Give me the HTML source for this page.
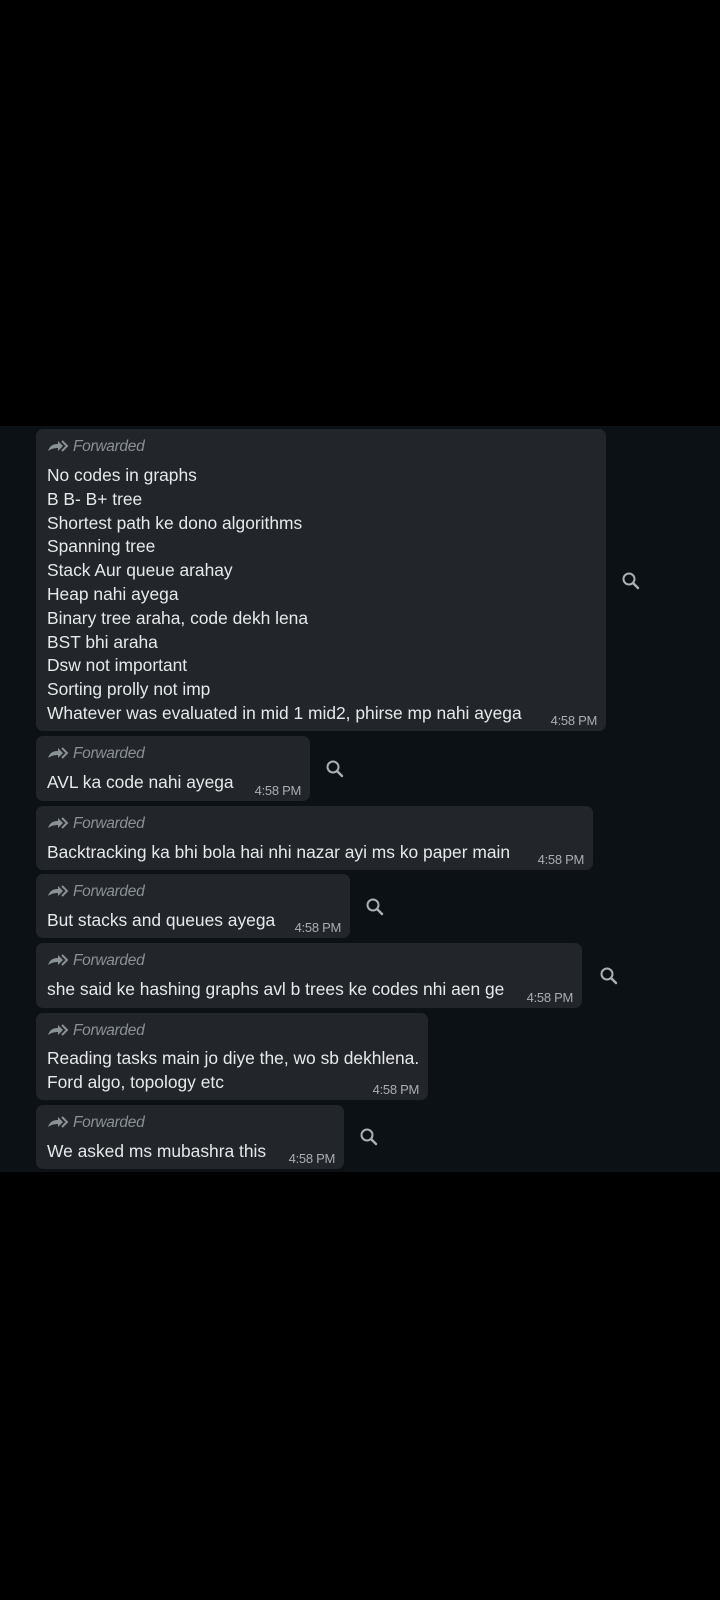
<!DOCTYPE html>
<html><head><meta charset="utf-8"><style>
*{margin:0;padding:0;box-sizing:border-box}
body{width:720px;height:1600px;background:#000;position:relative;overflow:hidden;font-family:"Liberation Sans",sans-serif}
.chat{position:absolute;left:0;top:426px;width:720px;height:746px;background:#0c1115}
.b{position:absolute;left:36px;background:#222529;border-radius:7px}
.f{position:absolute;left:11px;color:#8a9197;font-style:italic;font-size:15.5px;letter-spacing:-0.3px;line-height:18px}
.f svg{vertical-align:-2px;margin-right:4px}
.t{position:absolute;left:11px;color:#e6e8ea;font-size:17.4px;line-height:23.8px;white-space:pre}
.tm{position:absolute;color:#a9aeb2;font-size:13px;line-height:14px;letter-spacing:-0.3px}
.s{position:absolute;width:20px;height:20px}
</style></head><body>
<div class="chat"></div>
<svg width="0" height="0" style="position:absolute"><defs><g id="fw"><path d="M1 12 C3 6 7 5 11 5 V2 L16 7 L11 12 V9 C7 9 4 10 1 12Z" fill="#8a9197"/><path d="M15 2 L20 7 L15 12" fill="none" stroke="#8a9197" stroke-width="2"/></g><g id="sr"><circle cx="8" cy="8" r="5.5" fill="none" stroke="#aab0b5" stroke-width="2"/><path d="M12 12 L17 17" stroke="#aab0b5" stroke-width="2.4" stroke-linecap="round"/></g></defs></svg>

<div class="b" style="top:429px;width:570px;height:302px">
<div class="f" style="top:9px"><svg width="22" height="14"><use href="#fw"/></svg>Forwarded</div>
<div class="t" style="top:35px">No codes in graphs
B B- B+ tree
Shortest path ke dono algorithms
Spanning tree
Stack Aur queue arahay
Heap nahi ayega
Binary tree araha, code dekh lena
BST bhi araha
Dsw not important
Sorting prolly not imp
Whatever was evaluated in mid 1 mid2, phirse mp nahi ayega</div>
<div class="tm" style="right:9px;top:285px">4:58 PM</div>
</div>
<svg class="s" style="left:621px;top:571px"><use href="#sr"/></svg>

<div class="b" style="top:736px;width:274px;height:65px">
<div class="f" style="top:9px"><svg width="22" height="14"><use href="#fw"/></svg>Forwarded</div>
<div class="t" style="top:35px">AVL ka code nahi ayega</div>
<div class="tm" style="right:9px;top:48px">4:58 PM</div>
</div>
<svg class="s" style="left:325px;top:759px"><use href="#sr"/></svg>

<div class="b" style="top:806px;width:557px;height:64px">
<div class="f" style="top:9px"><svg width="22" height="14"><use href="#fw"/></svg>Forwarded</div>
<div class="t" style="top:35px">Backtracking ka bhi bola hai nhi nazar ayi ms ko paper main</div>
<div class="tm" style="right:9px;top:47px">4:58 PM</div>
</div>

<div class="b" style="top:874px;width:314px;height:64px">
<div class="f" style="top:9px"><svg width="22" height="14"><use href="#fw"/></svg>Forwarded</div>
<div class="t" style="top:35px">But stacks and queues ayega</div>
<div class="tm" style="right:9px;top:47px">4:58 PM</div>
</div>
<svg class="s" style="left:365px;top:897px"><use href="#sr"/></svg>

<div class="b" style="top:943px;width:546px;height:65px">
<div class="f" style="top:9px"><svg width="22" height="14"><use href="#fw"/></svg>Forwarded</div>
<div class="t" style="top:35px">she said ke hashing graphs avl b trees ke codes nhi aen ge</div>
<div class="tm" style="right:9px;top:48px">4:58 PM</div>
</div>
<svg class="s" style="left:599px;top:966px"><use href="#sr"/></svg>

<div class="b" style="top:1013px;width:392px;height:87px">
<div class="f" style="top:9px"><svg width="22" height="14"><use href="#fw"/></svg>Forwarded</div>
<div class="t" style="top:34px">Reading tasks main jo diye the, wo sb dekhlena.
Ford algo, topology etc</div>
<div class="tm" style="right:9px;top:70px">4:58 PM</div>
</div>

<div class="b" style="top:1105px;width:308px;height:64px">
<div class="f" style="top:9px"><svg width="22" height="14"><use href="#fw"/></svg>Forwarded</div>
<div class="t" style="top:35px">We asked ms mubashra this</div>
<div class="tm" style="right:9px;top:47px">4:58 PM</div>
</div>
<svg class="s" style="left:359px;top:1127px"><use href="#sr"/></svg>
</body></html>
